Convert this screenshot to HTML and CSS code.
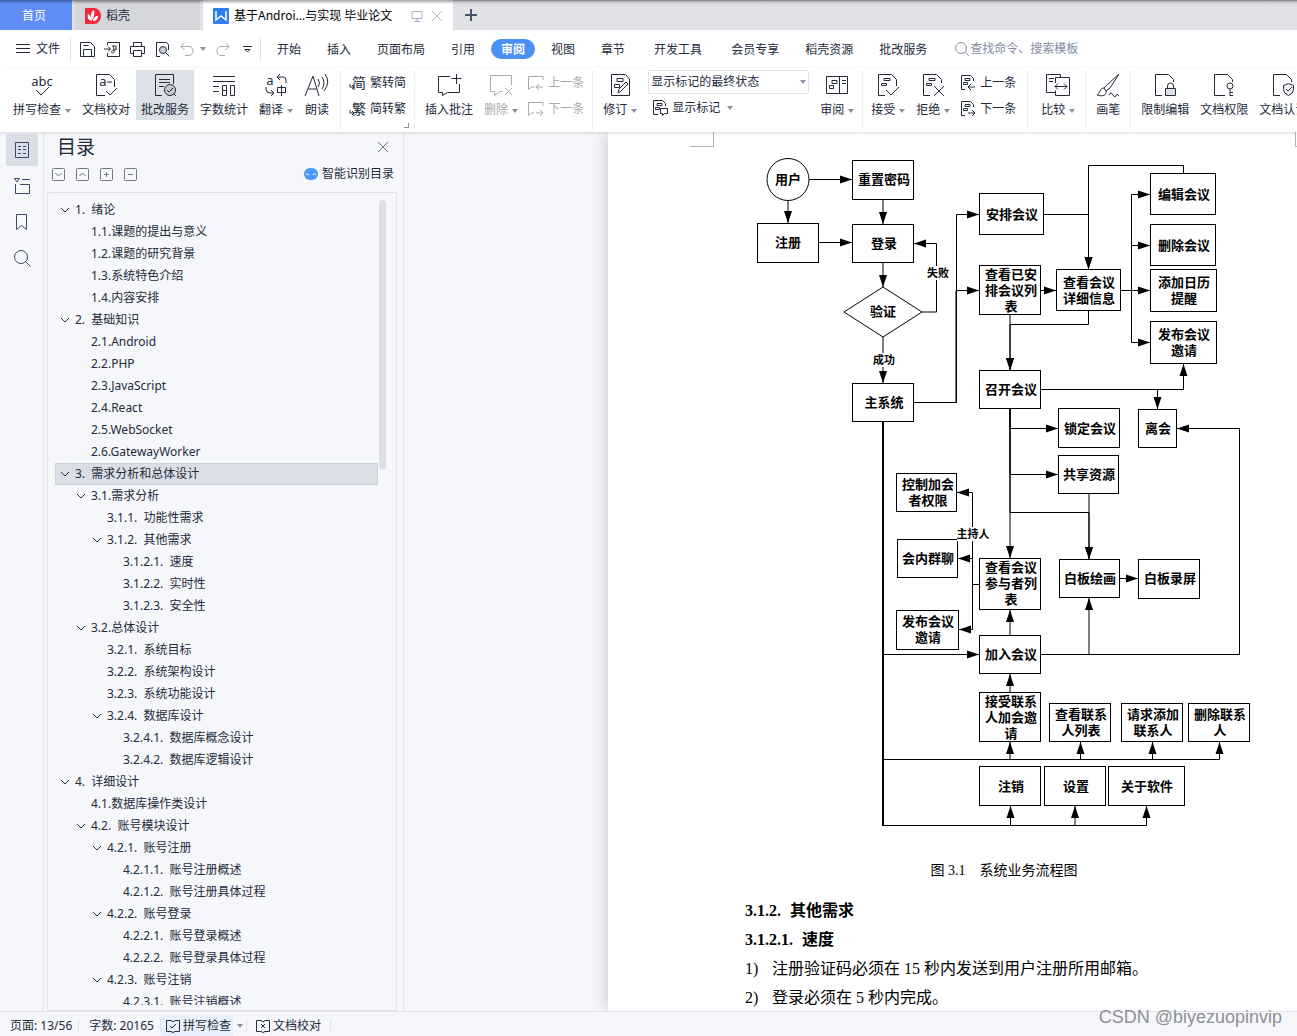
FILE: index.html
```
<!DOCTYPE html>
<html lang="zh-CN">
<head>
    <meta charset="UTF-8">
    <meta name="viewport" content="width=device-width, initial-scale=1.0">
    <title>基于Android的会议系统设计与实现 毕业论文</title>
    <link rel="stylesheet" href="styles.css">
</head>
<body>
    <svg class="defs" aria-hidden="true">
        <symbol id="chev" viewBox="0 0 10 10"><path d="M1 3l4 4 4-4"/></symbol>
        <symbol id="bubble-prev" viewBox="0 0 18 18"><path d="M16 6V2.500H1.500v13l3-2.500H8M16 13H9.500M12 10l-3 3 3 3"/></symbol>
        <symbol id="bubble-next" viewBox="0 0 18 18"><path d="M16 6V2.500H1.500v13l3-2.500H7M9 13h7M13 10l3 3-3 3"/></symbol>
        <symbol id="doc-prev" viewBox="0 0 18 18"><path d="M6 15.500H2.500v-14h9l3 3V7M6 4.500h5v2H6zM4.500 8.500h4v2h-4zM16 13H9.500M12 10l-3 3 3 3"/></symbol>
        <symbol id="doc-next" viewBox="0 0 18 18"><path d="M6 15.500H2.500v-14h9l3 3V7M6 4.500h5v2H6zM4.500 8.500h4v2h-4zM9 13h7M13 10l3 3-3 3"/></symbol>
    </svg>

    <nav class="tabs">
        <a class="tab home" href="#">首页</a>
        <a class="tab docer" href="#">
            <svg width="16" height="16" viewBox="0 0 16 16"><path d="M0 0h9a7 8 0 0 1 0 16H0z" fill="#f3283c"/><path d="M7 13C3 12 2 9 3 6c2 1 3 3 4 7zM7 12C5 8 6 4 9 2c1 4 0 7-2 10zM8 13c0-3 2-5 5-5 0 3-2 5-5 5z" fill="#fff"/></svg>
            稻壳
        </a>
        <a class="tab doc" href="#">
            <svg width="16" height="16" viewBox="0 0 16 16"><rect width="16" height="16" rx="1" fill="#2e7df0"/><path d="M3 3v9l5-4 5 4V3" fill="none" stroke="#fff" stroke-width="1.500"/></svg>
            <span>基于Androi...与实现 毕业论文</span>
            <svg class="line pale" width="12" height="12" viewBox="0 0 12 12"><path d="M1 1.500h10v7H1zM6 8.500v3M3 11.500h6"/></svg>
            <svg class="line pale" width="12" height="12" viewBox="0 0 12 12"><path d="M1 1l10 10M11 1L1 11"/></svg>
        </a>
        <button class="new-tab" aria-label="新建"><svg width="12" height="12" viewBox="0 0 12 12"><path d="M6 0v12M0 6h12" stroke="#46536f" stroke-width="2"/></svg></button>
    </nav>

    <header class="menubar">
        <button class="file"><svg class="line" width="16" height="12" viewBox="0 0 16 12"><path d="M1 1.500h14M1 5.500h14M1 9.500h14"/></svg>文件</button>
        <div class="quick">
            <button aria-label="保存"><svg class="line" width="17" height="17" viewBox="0 0 17 17"><path d="M1.500 1.500h10l4 4v10h-14zM4.500 15V8.500h8V15M4.500 4.500h5"/></svg></button>
            <button aria-label="输出为PDF"><svg class="line" width="17" height="17" viewBox="0 0 17 17"><path d="M3.500 4V1.500h12v14h-12V12M0 8h6M4 5.500L6.500 8 4 10.500M8 5h4v4H9c-2 1-2 3 0 3s1-5 0-7"/></svg></button>
            <button aria-label="打印"><svg class="line" width="17" height="17" viewBox="0 0 17 17"><path d="M4.500 5V1.500h8V5M4 12.500H1.500v-7h14v7H13M4.500 9.500h8v6h-8z"/></svg></button>
            <button aria-label="打印预览"><svg class="line" width="17" height="17" viewBox="0 0 17 17"><path d="M6 15.500H2.500v-14h10l2 2V9"/><circle cx="9" cy="9" r="3.500" fill="#ccd3dc"/><path d="M11.500 11.500l4 4"/></svg></button>
            <button class="off" aria-label="撤销"><svg class="line" width="17" height="17" viewBox="0 0 17 17"><path d="M5 2L2 5.500 5.500 9M2 5.500h8a4 4.500 0 0 1 0 9H6"/></svg></button>
            <i class="caret"></i>
            <button class="off redo" aria-label="恢复"><svg class="line" width="17" height="17" viewBox="0 0 17 17"><path d="M12 2l3 3.500L11.500 9M15 5.500H7a4 4.500 0 0 0 0 9h4"/></svg></button>
            <button aria-label="更多"><svg class="line" width="9" height="9" viewBox="0 0 9 9"><path d="M0 1.500h9M2 4.500h5L4.500 7z"/></svg></button>
        </div>
        <nav class="menu">
            <button>开始</button>
            <button>插入</button>
            <button>页面布局</button>
            <button>引用</button>
            <button class="active">审阅</button>
            <button>视图</button>
            <button>章节</button>
            <button class="wide">开发工具</button>
            <button>会员专享</button>
            <button>稻壳资源</button>
            <button>批改服务</button>
        </nav>
        <label class="search">
            <svg class="line" width="16" height="16" viewBox="0 0 16 16"><circle cx="7" cy="7" r="5.500"/><path d="M11 11l4 4"/></svg>
            <input type="text" placeholder="查找命令、搜索模板" aria-label="查找命令、搜索模板">
        </label>
    </header>

    <div class="ribbon">
        <button class="tool">
            <svg class="line" width="24" height="24" viewBox="0 0 24 24"><text x="12" y="13" text-anchor="middle" class="glyph">abc</text><path d="M6 17l5 5 8-8"/></svg>
            <span>拼写检查<i class="caret"></i></span>
        </button>
        <button class="tool">
            <svg class="line" width="24" height="24" viewBox="0 0 24 24"><path d="M11 22.500H2.500v-21h13l5 5V14M12 18l4 4 7-7M13 9h5"/><text x="9" y="13" text-anchor="middle" class="glyph">a</text></svg>
            <span>文档校对</span>
        </button>
        <button class="tool on">
            <svg class="line" width="24" height="24" viewBox="0 0 24 24"><path d="M9 22.500H2.500v-21h18V11M6 6.500h11M6 9.500h11M6 13.500h5"/><circle cx="17" cy="17" r="5.500" fill="#c3cad3"/><path d="M14 17l2 2 4-4M21 21l2 2"/></svg>
            <span>批改服务</span>
        </button>
        <button class="tool">
            <svg class="line" width="24" height="24" viewBox="0 0 24 24"><path d="M1 3.500h22M1 8.500h22M1 13.500h6M1 18.500h6M10.500 12.500h4v10h-4zM10.500 17.500h4M18.500 12.500h4v10h-4z"/></svg>
            <span>字数统计</span>
        </button>
        <button class="tool">
            <svg class="line" width="24" height="24" viewBox="0 0 24 24"><text x="6" y="12" text-anchor="middle" class="glyph">a</text><path d="M16 1l-3 3 3 3M13 4h6a3 3 0 0 1 3 3v3M2 14v2a4 4 0 0 0 4 4h3M7 17l3 3-3 3M13.500 14.500h8v5h-8zM17.500 12v11"/></svg>
            <span>翻译<i class="caret"></i></span>
        </button>
        <button class="tool">
            <svg class="line" width="26" height="24" viewBox="0 0 26 24"><path d="M1 23L9 3l6 20M4 16h9M14 6q3 4 0 8M18 4q4 6 0 12M21 1q6 8-1 17"/></svg>
            <span>朗读</span>
        </button>
        <i class="sep"></i>
        <div class="stack">
            <button><svg class="line" width="18" height="18" viewBox="0 0 18 18"><text x="10" y="14" text-anchor="middle" class="glyph small">简</text><path d="M1 10v3h3M3 11l2 2-2 2"/></svg>繁转简</button>
            <button><svg class="line" width="18" height="18" viewBox="0 0 18 18"><text x="10" y="14" text-anchor="middle" class="glyph small">繁</text><path d="M1 10v3h3M3 11l2 2-2 2"/></svg>简转繁</button>
            <i class="corner"></i>
        </div>
        <i class="sep"></i>
        <button class="tool">
            <svg class="line" width="24" height="24" viewBox="0 0 24 24"><path d="M13 3.500H1.500v16h4v3l5-3h12V11M19.500 1v10M14.500 5.500h10"/></svg>
            <span>插入批注</span>
        </button>
        <button class="tool off">
            <svg class="line" width="24" height="24" viewBox="0 0 24 24"><path d="M22.500 12V2.500h-21v16h4v4l5-4h3M16 15l7 7M23 15l-7 7"/></svg>
            <span>删除<i class="caret"></i></span>
        </button>
        <div class="stack off">
            <button><svg class="line" width="18" height="18"><use href="#bubble-prev"/></svg>上一条</button>
            <button><svg class="line" width="18" height="18"><use href="#bubble-next"/></svg>下一条</button>
        </div>
        <i class="sep"></i>
        <button class="tool">
            <svg class="line" width="24" height="24" viewBox="0 0 24 24"><path d="M15 1.500H3.500v21h18V6l-4-4.500H15M9 5.500h6v3H9zM6.500 11.500h5v3h-5zM10 20l1-4 7-7 2 2-7 7z"/></svg>
            <span>修订<i class="caret"></i></span>
        </button>
        <div class="stack markup">
            <div class="select">
                <select aria-label="显示标记的最终状态"><option>显示标记的最终状态</option></select>
                <i class="caret"></i>
            </div>
            <button><svg class="line" width="18" height="18" viewBox="0 0 18 18"><path d="M7 15.500H2.500v-14h9l3 3V7M6 4.500h5v2H6zM4.500 8.500h4v2h-4zM9.500 9.500h7v5h-3l-2 2v-2h-2z"/></svg>显示标记<i class="caret"></i></button>
        </div>
        <button class="tool">
            <svg class="line" width="24" height="24" viewBox="0 0 24 24"><path d="M1.500 3.500h21v17h-21zM14.500 3.500v17M7 7.500h5v3H7zM4.500 12.500h4v3h-4zM17 7.500h4M17 10.500h4"/></svg>
            <span>审阅<i class="caret"></i></span>
        </button>
        <i class="sep tight"></i>
        <button class="tool">
            <svg class="line" width="24" height="24" viewBox="0 0 24 24"><path d="M9 22.500H2.500v-21h13l5 5V13M8 5.500h6v2H8zM5.500 10.500h5v2h-5zM10 17l5 5 8-8"/></svg>
            <span>接受<i class="caret"></i></span>
        </button>
        <button class="tool">
            <svg class="line" width="24" height="24" viewBox="0 0 24 24"><path d="M9 22.500H2.500v-21h13l5 5V10M8 5.500h6v2H8zM5.500 10.500h5v2h-5zM13 13l10 10M23 13L13 23"/></svg>
            <span>拒绝<i class="caret"></i></span>
        </button>
        <div class="stack">
            <button><svg class="line" width="18" height="18"><use href="#doc-prev"/></svg>上一条</button>
            <button><svg class="line" width="18" height="18"><use href="#doc-next"/></svg>下一条</button>
        </div>
        <i class="sep wide"></i>
        <button class="tool">
            <svg class="line" width="24" height="24" viewBox="0 0 24 24"><path d="M9 19.500H.500v-18h14v3M9.500 10V4.500h14v18h-14v-5M3 5.500h5M3 8.500h4M9 13.500h12M12 10.500l-3 3 3 3M18 10.500l3 3-3 3"/></svg>
            <span>比较<i class="caret"></i></span>
        </button>
        <i class="sep"></i>
        <button class="tool">
            <svg class="line" width="24" height="24" viewBox="0 0 24 24"><path d="M23 1L11 12l-3 3 2 3 4-3zM8 15c-5 0-3 5-7 7 6 2 10 0 9-4M13 22q2-4 4 0t4-1l2 2"/></svg>
            <span>画笔</span>
        </button>
        <i class="sep"></i>
        <button class="tool">
            <svg class="line" width="24" height="24" viewBox="0 0 24 24"><path d="M9 22.500H2.500v-21h13l5 5V9"/><path d="M12.500 15.500h10v7h-10z" fill="#dde1e6"/><path d="M14.500 15v-2a3 3 0 0 1 6 0v2"/></svg>
            <span>限制编辑</span>
        </button>
        <button class="tool">
            <svg class="line" width="24" height="24" viewBox="0 0 24 24"><path d="M13 22.500H2.500v-21h13l5 5V9"/><circle cx="18" cy="13" r="3"/><path d="M18 16v7M18 19.500h3M18 22.500h3"/></svg>
            <span>文档权限</span>
        </button>
        <button class="tool">
            <svg class="line" width="24" height="24" viewBox="0 0 24 24"><path d="M9 22.500H2.500v-21h13l5 5V9"/><path d="M17.500 10.500l5 2v4q0 4-5 6-5-2-5-6v-4zM15 16l2 2 4-4" fill="#eef0f3"/></svg>
            <span>文档认证</span>
        </button>
    </div>

    <main class="work">
        <aside class="rail">
            <button class="on" aria-label="目录"><svg class="line" width="18" height="18" viewBox="0 0 18 18"><path d="M2.500 1.500h13v15h-13zM5 5.500h3M10 5.500h3M5 8.500h3M10 8.500h3M5 12.500h3M10 12.500h3"/></svg></button>
            <button aria-label="章节"><svg class="line" width="18" height="18" viewBox="0 0 18 18"><path d="M1.500 1.500h5L4 5zM9 2.500h8M2.500 7v9.500h14v-9H7"/></svg></button>
            <button aria-label="书签"><svg class="line" width="18" height="18" viewBox="0 0 18 18"><path d="M3.500 1.500h10v15l-5-4-5 4z"/></svg></button>
            <button aria-label="查找"><svg class="line" width="18" height="18" viewBox="0 0 18 18"><circle cx="8" cy="8" r="6.500"/><path d="M12.500 12.500l5 5"/></svg></button>
        </aside>

        <section class="outline">
            <div class="title">
                <h2>目录</h2>
                <button aria-label="关闭"><svg class="line" width="10" height="10" viewBox="0 0 10 10"><path d="M0 0l10 10M10 0L0 10"/></svg></button>
            </div>
            <div class="bar">
                <button aria-label="展开"><svg class="line" width="13" height="13" viewBox="0 0 13 13"><rect x=".500" y=".500" width="12" height="12" rx="1"/><path d="M3.500 5l3 3 3-3"/></svg></button>
                <button aria-label="收起"><svg class="line" width="13" height="13" viewBox="0 0 13 13"><rect x=".500" y=".500" width="12" height="12" rx="1"/><path d="M3.500 8l3-3 3 3"/></svg></button>
                <button aria-label="增加"><svg class="line" width="13" height="13" viewBox="0 0 13 13"><rect x=".500" y=".500" width="12" height="12" rx="1"/><path d="M4 6.500h5M6.500 4v5"/></svg></button>
                <button aria-label="减少"><svg class="line" width="13" height="13" viewBox="0 0 13 13"><rect x=".500" y=".500" width="12" height="12" rx="1"/><path d="M4 6.500h5"/></svg></button>
                <a class="smart" href="#"><svg width="14" height="12" viewBox="0 0 14 12"><rect width="14" height="12" rx="6" fill="#4a9af5"/><path d="M2 7q1-3 3 0M9 7q1-3 3 0" fill="none" stroke="#fff"/></svg>智能识别目录</a>
            </div>
            <div class="tree">
                <ul>
                    <li><svg><use href="#chev"/></svg><a href="#">1.&nbsp; 绪论</a></li>
                    <li class="l1 leaf"><a href="#">1.1.课题的提出与意义</a></li>
                    <li class="l1 leaf"><a href="#">1.2.课题的研究背景</a></li>
                    <li class="l1 leaf"><a href="#">1.3.系统特色介绍</a></li>
                    <li class="l1 leaf"><a href="#">1.4.内容安排</a></li>
                    <li><svg><use href="#chev"/></svg><a href="#">2.&nbsp; 基础知识</a></li>
                    <li class="l1 leaf"><a href="#">2.1.Android</a></li>
                    <li class="l1 leaf"><a href="#">2.2.PHP</a></li>
                    <li class="l1 leaf"><a href="#">2.3.JavaScript</a></li>
                    <li class="l1 leaf"><a href="#">2.4.React</a></li>
                    <li class="l1 leaf"><a href="#">2.5.WebSocket</a></li>
                    <li class="l1 leaf"><a href="#">2.6.GatewayWorker</a></li>
                    <li class="current"><svg><use href="#chev"/></svg><a href="#">3.&nbsp; 需求分析和总体设计</a></li>
                    <li class="l1"><svg><use href="#chev"/></svg><a href="#">3.1.需求分析</a></li>
                    <li class="l2 leaf"><a href="#">3.1.1.&nbsp; 功能性需求</a></li>
                    <li class="l2"><svg><use href="#chev"/></svg><a href="#">3.1.2.&nbsp; 其他需求</a></li>
                    <li class="l3 leaf"><a href="#">3.1.2.1.&nbsp; 速度</a></li>
                    <li class="l3 leaf"><a href="#">3.1.2.2.&nbsp; 实时性</a></li>
                    <li class="l3 leaf"><a href="#">3.1.2.3.&nbsp; 安全性</a></li>
                    <li class="l1"><svg><use href="#chev"/></svg><a href="#">3.2.总体设计</a></li>
                    <li class="l2 leaf"><a href="#">3.2.1.&nbsp; 系统目标</a></li>
                    <li class="l2 leaf"><a href="#">3.2.2.&nbsp; 系统架构设计</a></li>
                    <li class="l2 leaf"><a href="#">3.2.3.&nbsp; 系统功能设计</a></li>
                    <li class="l2"><svg><use href="#chev"/></svg><a href="#">3.2.4.&nbsp; 数据库设计</a></li>
                    <li class="l3 leaf"><a href="#">3.2.4.1.&nbsp; 数据库概念设计</a></li>
                    <li class="l3 leaf"><a href="#">3.2.4.2.&nbsp; 数据库逻辑设计</a></li>
                    <li><svg><use href="#chev"/></svg><a href="#">4.&nbsp; 详细设计</a></li>
                    <li class="l1 leaf"><a href="#">4.1.数据库操作类设计</a></li>
                    <li class="l1"><svg><use href="#chev"/></svg><a href="#">4.2.&nbsp; 账号模块设计</a></li>
                    <li class="l2"><svg><use href="#chev"/></svg><a href="#">4.2.1.&nbsp; 账号注册</a></li>
                    <li class="l3 leaf"><a href="#">4.2.1.1.&nbsp; 账号注册概述</a></li>
                    <li class="l3 leaf"><a href="#">4.2.1.2.&nbsp; 账号注册具体过程</a></li>
                    <li class="l2"><svg><use href="#chev"/></svg><a href="#">4.2.2.&nbsp; 账号登录</a></li>
                    <li class="l3 leaf"><a href="#">4.2.2.1.&nbsp; 账号登录概述</a></li>
                    <li class="l3 leaf"><a href="#">4.2.2.2.&nbsp; 账号登录具体过程</a></li>
                    <li class="l2"><svg><use href="#chev"/></svg><a href="#">4.2.3.&nbsp; 账号注销</a></li>
                    <li class="l3 leaf"><a href="#">4.2.3.1.&nbsp; 账号注销概述</a></li>
                </ul>
                <i class="thumb"></i>
            </div>
        </section>

        <section class="canvas">
            <article class="page">
                <i class="crop left"></i>
                <i class="crop right"></i>
                <svg class="flow" width="520" height="700" viewBox="740 140 520 700">
                    <defs>
                        <marker id="arrow" markerUnits="userSpaceOnUse" markerWidth="12" markerHeight="10" refX="12" refY="5" orient="auto"><path d="M0 1l12 4-12 4z"/></marker>
                    </defs>
                    <!-- connectors -->
                    <g class="edges">
                        <path d="M808 179.500H852"/><path d="M788 200V223"/>
                        <path d="M818 242.500H852"/><path d="M883 199V224"/>
                        <path d="M883 262V287"/><path d="M883 337V383"/>
                        <path d="M922 312H936.500V243.500H914"/>
                        <path d="M914 402.500H956.500V214.500H979"/><path d="M914 402.500H956V290.500H979"/>
                        <path d="M1044 214.500H1088.500V269"/><path d="M1183.500 173V165.500H1088.500V269"/>
                        <path d="M1041 290.500H1056"/>
                        <path d="M1121 290.500H1131.500V194.500H1150"/><path d="M1121 290.500H1131.500V245.500H1150"/>
                        <path d="M1121 290.500H1150"/><path d="M1121 290.500H1131.500V342.500H1150"/>
                        <path d="M1010 315V370"/><path d="M1088.500 311V324.500H1010V370"/>
                        <path d="M1041 389.500H1183.500V364"/><path d="M1041 389.500H1157.500V409"/>
                        <path d="M1010 409V558"/><path d="M1010 409V428.500H1058"/>
                        <path d="M1010 409V474.500H1058"/><path d="M1010 409V512.500H1089V559"/>
                        <path d="M1089 494V559"/><path d="M1120 578.500H1138"/>
                        <path d="M979 584.500H972.500V492.500H957"/><path d="M972.500 558.500H958"/><path d="M979 584.500H972.500V629.500H959"/>
                        <path d="M1010 635V610"/><path d="M1010 692V674"/>
                        <path d="M883 654.500H979"/><path d="M1041 654.500H1089V598"/>
                        <path d="M1041 654.500H1239.500V428.500H1177"/>
                        <path d="M883 759.500H1219.500V742"/><path d="M883 759.500H1152.500V742"/>
                        <path d="M883 759.500H1080.500V742"/><path d="M883 759.500H1010V742"/>
                        <path d="M883 825.500H1146.500V806"/><path d="M883 825.500H1075V806"/>
                        <path d="M883 825.500H1010.500V806"/>
                    </g>
                    <path class="trunk" d="M883 422V826"/>
                    <!-- nodes -->
                    <g class="nodes">
                        <circle cx="788" cy="179.500" r="21"/>
                        <rect x="852.500" y="160.500" width="61" height="39"/>
                        <rect x="757.500" y="223.500" width="61" height="39"/>
                        <rect x="852.500" y="224.500" width="61" height="38"/>
                        <path d="M844 312l39-25 39 25-39 25z"/>
                        <rect x="852.500" y="383.500" width="61" height="38"/>
                        <rect x="979.500" y="193.500" width="64" height="41"/>
                        <rect x="979.500" y="265.500" width="61" height="49"/>
                        <rect x="1056.500" y="269.500" width="64" height="41"/>
                        <rect x="1150.500" y="173.500" width="65" height="41"/>
                        <rect x="1150.500" y="224.500" width="65" height="41"/>
                        <rect x="1150.500" y="269.500" width="66" height="42"/>
                        <rect x="1150.500" y="321.500" width="66" height="42"/>
                        <rect x="979.500" y="370.500" width="61" height="38"/>
                        <rect x="1058.500" y="408.500" width="61" height="39"/>
                        <rect x="1138.500" y="409.500" width="38" height="38"/>
                        <rect x="1058.500" y="455.500" width="60" height="38"/>
                        <rect x="896.500" y="473.500" width="60" height="38"/>
                        <rect x="897.500" y="539.500" width="60" height="38"/>
                        <rect x="979.500" y="558.500" width="61" height="51"/>
                        <rect x="896.500" y="610.500" width="62" height="39"/>
                        <rect x="979.500" y="635.500" width="61" height="38"/>
                        <rect x="1059.500" y="559.500" width="60" height="38"/>
                        <rect x="1138.500" y="559.500" width="61" height="39"/>
                        <rect x="979.500" y="692.500" width="61" height="49"/>
                        <rect x="1049.500" y="703.500" width="61" height="38"/>
                        <rect x="1121.500" y="703.500" width="61" height="38"/>
                        <rect x="1188.500" y="703.500" width="61" height="38"/>
                        <rect x="979.500" y="766.500" width="61" height="39"/>
                        <rect x="1044.500" y="766.500" width="61" height="39"/>
                        <rect x="1108.500" y="766.500" width="76" height="39"/>
                    </g>
                    <g class="masks">
                        <rect x="926" y="266" width="24" height="14"/>
                        <rect x="872" y="353" width="24" height="14"/>
                        <rect x="957" y="527" width="33" height="14"/>
                    </g>
                    <g class="labels">
                        <text x="788" y="184">用户</text>
                        <text x="884" y="184">重置密码</text>
                        <text x="788" y="247">注册</text>
                        <text x="884" y="248">登录</text>
                        <text x="883" y="316">验证</text>
                        <text x="884" y="407">主系统</text>
                        <text x="1012" y="219">安排会议</text>
                        <text><tspan x="1011" y="279">查看已安</tspan><tspan x="1011" y="295">排会议列</tspan><tspan x="1011" y="311">表</tspan></text>
                        <text><tspan x="1089" y="287">查看会议</tspan><tspan x="1089" y="303">详细信息</tspan></text>
                        <text x="1184" y="199">编辑会议</text>
                        <text x="1184" y="250">删除会议</text>
                        <text><tspan x="1184" y="287">添加日历</tspan><tspan x="1184" y="303">提醒</tspan></text>
                        <text><tspan x="1184" y="339">发布会议</tspan><tspan x="1184" y="355">邀请</tspan></text>
                        <text x="1011" y="394">召开会议</text>
                        <text x="1090" y="433">锁定会议</text>
                        <text x="1158" y="433">离会</text>
                        <text x="1089" y="479">共享资源</text>
                        <text><tspan x="928" y="489">控制加会</tspan><tspan x="928" y="505">者权限</tspan></text>
                        <text x="928" y="563">会内群聊</text>
                        <text><tspan x="1011" y="572">查看会议</tspan><tspan x="1011" y="588">参与者列</tspan><tspan x="1011" y="604">表</tspan></text>
                        <text><tspan x="928" y="626">发布会议</tspan><tspan x="928" y="642">邀请</tspan></text>
                        <text x="1011" y="659">加入会议</text>
                        <text x="1090" y="583">白板绘画</text>
                        <text x="1170" y="583">白板录屏</text>
                        <text><tspan x="1011" y="706">接受联系</tspan><tspan x="1011" y="722">人加会邀</tspan><tspan x="1011" y="738">请</tspan></text>
                        <text><tspan x="1081" y="719">查看联系</tspan><tspan x="1081" y="735">人列表</tspan></text>
                        <text><tspan x="1153" y="719">请求添加</tspan><tspan x="1153" y="735">联系人</tspan></text>
                        <text><tspan x="1220" y="719">删除联系</tspan><tspan x="1220" y="735">人</tspan></text>
                        <text x="1011" y="791">注销</text>
                        <text x="1076" y="791">设置</text>
                        <text x="1147" y="791">关于软件</text>
                        <text class="note" x="938" y="277">失败</text>
                        <text class="note" x="884" y="364">成功</text>
                        <text class="note" x="973" y="538">主持人</text>
                    </g>
                </svg>
                <p class="caption">图 3.1<span>系统业务流程图</span></p>
                <h3>3.1.2.<span>其他需求</span></h3>
                <h4>3.1.2.1.<span>速度</span></h4>
                <ol>
                    <li>注册验证码必须在 15 秒内发送到用户注册所用邮箱。</li>
                    <li>登录必须在 5 秒内完成。</li>
                </ol>
            </article>
        </section>
    </main>

    <footer class="status">
        <span>页面: 13/56</span>
        <span>字数: 20165</span>
        <button class="spell"><svg class="line" width="16" height="14" viewBox="0 0 16 14"><path d="M6 1.500H1.500v11H6l2 1 2-1h4.500v-11H10L8 3 6 1.500M5 7l2 2 4-4"/></svg>拼写检查</button>
        <button class="more" aria-label="拼写检查选项"><i class="caret"></i></button>
        <button class="proof"><svg class="line" width="16" height="14" viewBox="0 0 16 14"><path d="M6 1.500H1.500v11H6l2 1 2-1h4.500v-11H10L8 3 6 1.500M6 5l4 4M10 5L6 9"/></svg>文档校对</button>
    </footer>
    <div class="watermark">CSDN @biyezuopinvip</div>
</body>
</html>
```
FILE: styles.css
```
:root {
    --ink: #232a3c;
    --blue: #4991f2;
    --panel: #f5f7fa;
    --line: #e0e3ea;
    --muted: #8792a8;
}

* { box-sizing: border-box; }

body {
    margin: 0;
    height: 100vh;
    display: flex;
    flex-direction: column;
    overflow: hidden;
    background: #fff;
    color: var(--ink);
    font: 12px/18px "Noto Sans", "Noto Sans CJK SC", sans-serif;
}

a { color: inherit; text-decoration: none; }

button {
    padding: 0;
    border: 0;
    background: none;
    color: inherit;
    font: inherit;
    white-space: nowrap;
}

svg { flex: none; display: block; }
.defs { position: absolute; width: 0; height: 0; }
.line { fill: none; stroke: currentColor; overflow: visible; }
.glyph { font-size: 13px; fill: currentColor; stroke: none; }
.glyph.small { font: 14px "Liberation Sans", "Noto Sans CJK SC", sans-serif; }
.off { color: #a7a9ae; }

.caret {
    display: inline-block;
    margin-left: 4px;
    border: 3px solid transparent;
    border-top: 4px solid var(--muted);
    border-bottom: 0;
    vertical-align: middle;
}

/* window tabs */
.tabs {
    flex: none;
    display: flex;
    height: 30px;
    background: linear-gradient(#77797d, #c4c5c9 2px, #e1e2e6 5px);
}

.tab {
    display: flex;
    align-items: center;
    gap: 5px;
    padding: 2px 10px 0;
}

.home {
    width: 72px;
    margin-right: 3px;
    padding-left: 22px;
    background: linear-gradient(#435f9e, #5f8df8 4px);
    color: #fff;
}

.docer {
    width: 125px;
    margin-right: 3px;
    background: linear-gradient(#77797d, #d6d7da 4px);
}

.doc {
    width: 250px;
    background: linear-gradient(#a0a0a0, #fff 4px);
    color: #000;
    white-space: nowrap;
}

.doc .pale { margin-left: auto; }
.doc .pale + .pale { margin-left: 3px; }
.pale { color: #a9b4cb; }
.new-tab { padding: 0 12px; }

/* menu row */
.menubar {
    flex: none;
    display: flex;
    align-items: center;
    height: 38px;
}

.file {
    display: flex;
    align-items: center;
    gap: 5px;
    width: 71px;
    height: 24px;
    padding-left: 15px;
    border-right: 1px solid var(--line);
}

.quick {
    display: flex;
    align-items: center;
    gap: 8px;
    width: 190px;
    height: 24px;
    padding-left: 8px;
    border-right: 1px solid var(--line);
}

.quick .caret { margin-left: -4px; }
.quick .redo { margin-right: 4px; }

.menu {
    display: flex;
    gap: 6px;
    margin-left: 6px;
}

.menu button {
    height: 20px;
    padding: 1px 10px 0;
    border-radius: 10px;
}

.menu .wide { padding: 1px 13px 0; }

.menu .active {
    background: var(--blue);
    color: #fff;
    font-weight: bold;
}

.search {
    display: flex;
    align-items: center;
    margin-left: 17px;
    color: var(--muted);
}

.search input {
    width: 130px;
    padding: 0;
    border: 0;
    background: none;
    font: inherit;
}

.search input::placeholder { color: #7f8ba3; }

/* ribbon */
.ribbon {
    position: relative;
    z-index: 1;
    flex: none;
    display: flex;
    gap: 1px;
    height: 64px;
    padding: 2px 0 2px 8px;
    box-shadow: 0 1px 3px rgba(0, 0, 0, 0.15);
    background: #fff;
    overflow: hidden;
}

.tool {
    flex: none;
    display: flex;
    flex-direction: column;
    align-items: center;
    gap: 4px;
    height: 50px;
    padding: 3px 5px 0;
}

.tool.on { background: #dce1e7; }

.sep {
    flex: none;
    width: 1px;
    margin: 0 4px;
    background: #eceef1;
}

.sep.tight { margin: 0 2px; }
.sep.wide { margin: 0 7px; }

.stack {
    position: relative;
    flex: none;
    display: flex;
    flex-direction: column;
    gap: 8px;
    padding: 4px 3px 0;
}

.stack button {
    display: flex;
    align-items: center;
    gap: 3px;
    height: 18px;
}

.corner {
    position: absolute;
    right: 0;
    bottom: 2px;
    width: 5px;
    height: 5px;
    border-right: 1px solid var(--muted);
    border-bottom: 1px solid var(--muted);
}

.markup {
    gap: 5px;
    width: 171px;
    padding: 0 5px;
}

.select { position: relative; }

.select select {
    appearance: none;
    width: 100%;
    height: 24px;
    padding: 0 2px;
    border: 1px solid var(--line);
    border-radius: 2px;
    background: #fff;
    color: inherit;
    font: inherit;
}

.select .caret {
    position: absolute;
    right: 3px;
    top: 10px;
    pointer-events: none;
}

.markup button { padding-left: 3px; }

/* workspace */
.work {
    flex: 1;
    min-height: 0;
    display: flex;
    background: var(--panel);
}

.rail {
    flex: none;
    display: flex;
    flex-direction: column;
    gap: 4px;
    width: 44px;
    padding: 2px 6px;
    border-right: 1px solid var(--line);
    color: #3a4765;
}

.rail button {
    display: grid;
    place-items: center;
    width: 32px;
    height: 32px;
    border-radius: 2px;
}

.rail .on { background: #dadfe7; }

.outline {
    flex: none;
    display: flex;
    flex-direction: column;
    width: 360px;
    padding: 0 6px 0 3px;
    border-right: 1px solid var(--line);
}

.title {
    display: flex;
    align-items: center;
    justify-content: space-between;
    height: 30px;
    padding: 0 9px 0 10px;
}

.title h2 {
    margin: 0;
    font-size: 19px;
    font-weight: normal;
}

.title button { color: #6c7588; }

.bar {
    display: flex;
    align-items: center;
    gap: 11px;
    height: 24px;
    margin-bottom: 6px;
    padding: 0 3px 0 5px;
    color: #73777f;
}

.smart {
    display: flex;
    align-items: center;
    gap: 4px;
    margin-left: auto;
    color: var(--ink);
}

.tree {
    position: relative;
    flex: 1;
    min-height: 0;
    display: flex;
    padding: 6px 18px 5px 7px;
    border: 1px solid var(--line);
    border-radius: 2px;
}

.tree ul {
    flex: 1;
    margin: 0;
    padding: 0;
    list-style: none;
    overflow: hidden;
}

.tree li {
    display: flex;
    align-items: center;
    gap: 5px;
    height: 22px;
    padding-left: 5px;
    white-space: nowrap;
}

.tree li svg {
    width: 10px;
    height: 10px;
    fill: none;
    stroke: var(--ink);
}

.tree .l1 { padding-left: 21px; }
.tree .l2 { padding-left: 37px; }
.tree .l3 { padding-left: 53px; }
.tree .leaf a { margin-left: 15px; }
.tree .current { background: #dadfe7; outline: 1px solid #cdd3dd; outline-offset: -1px; }

.thumb {
    position: absolute;
    top: 7px;
    right: 10px;
    width: 7px;
    height: 270px;
    border-radius: 4px;
    background: #dde0e4;
}

/* document */
.canvas {
    flex: 1;
    min-width: 0;
    padding-left: 204px;
    overflow: hidden;
}

.page {
    position: relative;
    height: 100%;
    padding: 8px 0 0 132px;
    background: #fff;
    box-shadow: 0 0 18px rgba(0, 0, 0, 0.2);
    color: #000;
    font-family: "Liberation Serif", "Noto Sans CJK SC", serif;
    font-size: 16px;
    line-height: 29px;
    white-space: nowrap;
}

.crop {
    position: absolute;
    top: 0;
    width: 24px;
    height: 15px;
    border: solid #b5b5b5;
    border-width: 0 1px 1px 0;
}

.crop.left { left: 82px; }
.crop.right { right: -22px; border-width: 0 0 1px 1px; }

.edges path { fill: none; stroke: #000; marker-end: url(#arrow); }
.trunk { stroke: #000; stroke-width: 2; }
.nodes { fill: #fff; stroke: #000; }
.masks { fill: #fff; }

.labels {
    font: bold 13px "Liberation Serif", "Noto Sans CJK SC", serif;
    text-anchor: middle;
}

.labels .note { font-size: 11px; }

.caption {
    width: 520px;
    margin: 16px 0 11px;
    padding-left: 8px;
    font-size: 14px;
    text-align: center;
}

.caption span { margin-left: 14px; }

.page h3, .page h4 {
    margin: 0 0 0 5px;
    font-size: 16px;
}

.page h3 span, .page h4 span { margin-left: 9px; }

.page ol {
    margin: 0 0 0 5px;
    padding: 0;
    list-style: none;
    counter-reset: item;
}

.page ol li { display: flex; counter-increment: item; }
.page ol li::before { content: counter(item) ")"; width: 27px; }

/* status bar */
.status {
    flex: none;
    display: flex;
    align-items: center;
    height: 25px;
    padding-top: 4px;
    border-top: 1px solid var(--line);
    background: var(--panel);
}

.status > * {
    height: 14px;
    line-height: 14px;
    border-right: 1px solid var(--line);
}

.status span { padding: 0 6px 0 10px; }

.status button { display: flex; align-items: center; gap: 2px; }

.status .spell {
    height: 20px;
    padding: 0 2px 0 4px;
    border: 0;
    background: #e8f0fb;
}

.status .more { padding-right: 3px; }
.status .proof { padding: 0 9px 0 8px; }

.watermark {
    position: absolute;
    right: 15px;
    bottom: 8px;
    color: #8e9095;
    font: 18px/22px "Liberation Sans", sans-serif;
}
```
